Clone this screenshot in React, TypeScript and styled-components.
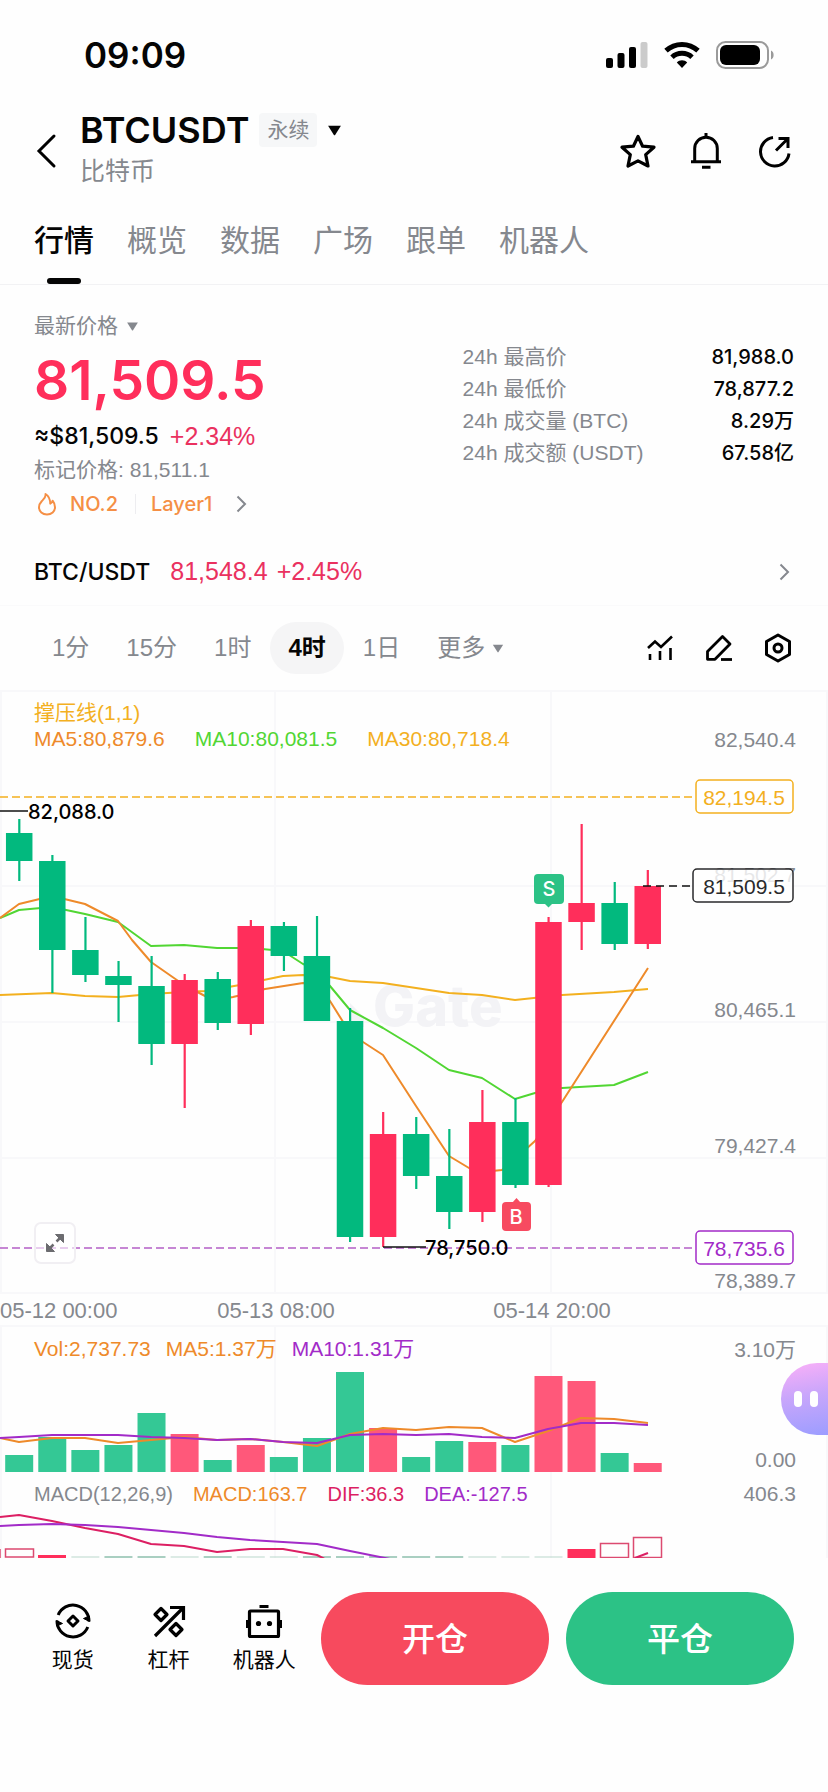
import React from "react";
import styled, { createGlobalStyle, css } from "styled-components";

const UP = "#ff2e5b";
const DOWN = "#02b97e";
const MUTED = "#85888e";
const GRID = "#f8f8fa";
const ORANGE = "#ee8a2a";
const YELLOW = "#f3b01f";
const LIME = "#51d633";
const PURPLE = "#a22bc8";
const CRIMSON = "#dc1f63";

const sans = `"Liberation Sans", "Noto Sans CJK SC", sans-serif`;
const medium = `Inter, "Noto Sans CJK SC", sans-serif`;

const GlobalStyle = createGlobalStyle`
  * { box-sizing: border-box; }
  body { margin: 0; background: #fefefe; color: #050505; font-family: ${sans}; }
  button { border: 0; padding: 0; margin: 0; background: none; color: inherit; font: inherit; cursor: pointer; }
  a { color: inherit; text-decoration: none; }
  svg { display: block; flex: none; }
  h1, p, dl, dd { margin: 0; }
`;

const Page = styled.main`
  width: 100%;
  overflow-x: hidden;
`;

/* ---------- status bar ---------- */

const StatusBar = styled.div`
  display: flex;
  align-items: center;
  justify-content: space-between;
  height: 96px;
  padding: 14px 54px 0 84px;
`;

const Clock = styled.time`
  font-family: ${medium};
  font-size: 35px;
  font-weight: 600;
  line-height: 44px;
`;

const StatusIcons = styled.div`
  display: flex;
  align-items: center;
  gap: 16px;
`;

/* ---------- header ---------- */

const Header = styled.header`
  display: flex;
  align-items: center;
  gap: 20px;
  padding: 12px 36px 14px 32px;
`;

const IconButton = styled.button`
  display: flex;
  align-items: center;
  justify-content: center;
`;

const TitleBlock = styled.div`
  flex: 1;
`;

const TitleRow = styled.div`
  display: flex;
  align-items: center;
  gap: 10px;
`;

const Title = styled.h1`
  font-family: ${medium};
  font-size: 36px;
  font-weight: 600;
  line-height: 44px;
`;

const Chip = styled.span`
  padding: 0 8px;
  border-radius: 4px;
  background: #f6f7f8;
  color: ${MUTED};
  font-size: 21px;
  line-height: 34px;
`;

const Subtitle = styled.p`
  color: ${MUTED};
  font-size: 25px;
  line-height: 38px;
`;

const HeaderActions = styled.div`
  display: flex;
  align-items: center;
  gap: 32px;
  padding-top: 4px;
`;

/* ---------- tabs ---------- */

const Tabs = styled.nav`
  display: flex;
  gap: 33px;
  padding: 0 34px;
  border-bottom: 1px solid #f2f2f4;
`;

const Tab = styled.a<{ $active?: boolean }>`
  position: relative;
  padding: 15px 0 21px;
  color: ${(p) => (p.$active ? "#050505" : MUTED)};
  font-size: 30px;
  font-weight: ${(p) => (p.$active ? 500 : 400)};
  line-height: 44px;
  white-space: nowrap;
  ${(p) =>
    p.$active &&
    css`
      &::after {
        content: "";
        position: absolute;
        bottom: 0;
        left: 50%;
        width: 34px;
        height: 6px;
        margin-left: -17px;
        border-radius: 3px;
        background: #050505;
      }
    `}
`;

/* ---------- price summary ---------- */

const Summary = styled.section`
  display: flex;
  justify-content: space-between;
  padding: 26px 34px 0;
`;

const PriceColumn = styled.div`
  display: flex;
  flex-direction: column;
  align-items: flex-start;
`;

const PriceKind = styled.button`
  display: flex;
  align-items: center;
  gap: 8px;
  color: ${MUTED};
  font-size: 21px;
  line-height: 30px;
`;

const LastPrice = styled.strong`
  color: ${UP};
  font-family: ${medium};
  font-size: 55px;
  font-weight: 600;
  line-height: 78px;
`;

const Line = styled.p`
  display: flex;
  align-items: center;
  gap: 11px;
  line-height: 34px;
`;

const Approx = styled.span`
  font-family: ${medium};
  font-size: 23px;
  font-weight: 500;
`;

const Change = styled.span`
  color: #ea315f;
  font-size: 25px;
`;

const MarkPrice = styled(Line)`
  color: ${MUTED};
  font-size: 21px;
`;

const TagLink = styled.a`
  display: flex;
  align-items: center;
  gap: 10px;
  color: #f58f45;
  font-family: ${medium};
  font-size: 20px;
  font-weight: 500;
  line-height: 34px;
`;

const TagDivider = styled.span`
  width: 1px;
  height: 20px;
  margin: 0 5px 0 7px;
  background: #ededf0;
`;

const TagArrow = styled.span`
  margin-left: 14px;
`;

const Stats = styled.dl`
  width: 44%;
  padding: 30px 0 0 3px;
`;

const StatRow = styled.div`
  display: flex;
  justify-content: space-between;
  font-size: 21px;
  line-height: 32px;
  white-space: nowrap;
`;

const StatName = styled.dt`
  color: ${MUTED};
`;

const StatValue = styled.dd`
  font-family: ${medium};
  font-size: 20px;
  font-weight: 500;
`;

/* ---------- spot pair row ---------- */

const SpotRow = styled.a`
  display: flex;
  align-items: center;
  height: 68px;
  margin-top: 17px;
  padding: 0 38px 0 34px;
  border-bottom: 1px solid #fafafb;
`;

const SpotPair = styled.span`
  margin-right: 20px;
  font-family: ${medium};
  font-size: 23px;
  font-weight: 500;
`;

const SpotQuote = styled.span`
  display: flex;
  flex: 1;
  gap: 9px;
  color: #ea315f;
  font-size: 25px;
`;

/* ---------- time frames ---------- */

const FrameBar = styled.div`
  display: flex;
  align-items: center;
  justify-content: space-between;
  height: 84px;
  padding: 0 36px 0 34px;
`;

const Frames = styled.div`
  display: flex;
  gap: 1px;
`;

const Frame = styled.button<{ $active?: boolean }>`
  display: flex;
  align-items: center;
  gap: 7px;
  padding: 0 18px;
  border-radius: 26px;
  background: ${(p) => (p.$active ? "#f5f5f6" : "transparent")};
  color: ${(p) => (p.$active ? "#050505" : MUTED)};
  font-size: 24px;
  font-weight: ${(p) => (p.$active ? 700 : 400)};
  line-height: 52px;
  white-space: nowrap;
`;

const FrameTools = styled.div`
  display: flex;
  align-items: center;
  gap: 31px;
`;

/* ---------- chart ---------- */

const Panel = styled.section`
  position: relative;
`;

const Plot = styled.svg`
  width: 100%;
  height: auto;
  font-family: ${sans};
  font-size: 21px;
`;

const AxisText = styled.text`
  fill: ${MUTED};
`;

const TimeText = styled(AxisText)`
  font-size: 22px;
`;

const StrongText = styled.text`
  font-family: ${medium};
  font-size: 20px;
  font-weight: 500;
`;

const Watermark = styled.text`
  font-family: ${medium};
  font-size: 56px;
  font-weight: 800;
`;

const Legend = styled.div<{ $top: number; $size: number }>`
  position: absolute;
  top: ${(p) => p.$top}px;
  left: 34px;
  font-size: ${(p) => p.$size}px;
  line-height: 26px;
  white-space: nowrap;
`;

const LegendRow = styled.div<{ $gap: number }>`
  display: flex;
  gap: ${(p) => p.$gap}px;
`;

const LegendItem = styled.span<{ $color: string }>`
  color: ${(p) => p.$color};
`;

const ExpandButton = styled.button`
  position: absolute;
  left: 34px;
  bottom: 63px;
  display: flex;
  align-items: center;
  justify-content: center;
  width: 42px;
  height: 42px;
  border: 2px solid #f1eff3;
  border-radius: 7px;
  background: rgba(255, 255, 255, 0.6);
`;

const Assistant = styled.button`
  position: absolute;
  top: 36px;
  right: 0;
  display: flex;
  align-items: center;
  gap: 8px;
  width: 47px;
  height: 72px;
  padding-left: 13px;
  border-radius: 36px 0 0 36px;
  background: linear-gradient(170deg, #fbb0f8 0%, #c9a6fb 45%, #9c9dff 100%);
`;

const Eye = styled.i`
  width: 8px;
  height: 16px;
  border-radius: 4px;
  background: #fff;
`;

/* ---------- bottom bar ---------- */

const BottomBar = styled.footer`
  display: flex;
  gap: 9px;
  padding: 34px 34px 107px 25px;
`;

const Shortcuts = styled.nav`
  display: flex;
  flex: none;
  width: 287px;
`;

const Shortcut = styled.a`
  display: flex;
  flex: 1;
  flex-direction: column;
  align-items: center;
  gap: 5px;
  padding-top: 11px;
  font-size: 21px;
  line-height: 32px;
  white-space: nowrap;
`;

const TradeActions = styled.div`
  display: flex;
  flex: 1;
  gap: 17px;
`;

const TradeButton = styled.button<{ $color: string }>`
  flex: 1;
  height: 93px;
  padding-bottom: 4px;
  border-radius: 47px;
  background: ${(p) => p.$color};
  color: #fff;
  font-size: 33px;
  font-weight: 500;
`;

/* ---------- data ---------- */

type Candle = {
  up: boolean;
  top: number;
  bottom: number;
  high: number;
  low: number;
  vol: number;
};

const c = (up: number, top: number, bottom: number, high: number, low: number, vol: number): Candle => ({
  up: up === 1,
  top,
  bottom,
  high,
  low,
  vol,
});

const candles: Candle[] = [
  c(0, 143, 171, 129, 191, 17),
  c(0, 171, 260, 165, 303, 35),
  c(0, 260, 285, 227, 292, 22),
  c(0, 286, 295, 271, 332, 27),
  c(0, 296, 354, 266, 375, 59),
  c(1, 290, 354, 284, 418, 38),
  c(0, 289, 333, 282, 340, 12),
  c(1, 236, 334, 230, 345, 27),
  c(0, 236, 266, 232, 281, 15),
  c(0, 266, 331, 226, 331, 34),
  c(0, 331, 547, 318, 552, 100),
  c(1, 444, 547, 422, 557, 44),
  c(0, 444, 486, 427, 499, 15),
  c(0, 486, 522, 439, 539, 31),
  c(1, 432, 522, 400, 532, 30),
  c(0, 432, 495, 408, 498, 27),
  c(1, 232, 495, 227, 497, 96),
  c(1, 213, 232, 134, 260, 91),
  c(0, 213, 254, 192, 260, 19),
  c(1, 196, 254, 180, 259, 9),
];

const slot = (i: number) => 19.2 + 33.08 * i;

const ma5 =
  "0,228 19,214 52,206 85,214 118,231 132,250 151,272 184,295 205,306 217,310 233,307 250,303 265,299 303,293 317,294 330,311 350,343 363,352 383,365 416,416 449,466 469,478 482,482 502,480 515,469 535,451 562,412 648,278";
const ma10 =
  "0,228 19,220 52,217 85,224 118,232 151,256 184,255 217,258 250,258 283,261 303,274 317,279 330,296 350,320 383,338 416,358 449,380 482,388 515,409 535,403 562,398 614,395 648,382";
const ma30 =
  "0,305 52,303 85,306 118,307 151,304 184,302 205,301 240,295 283,286 303,285 330,287 350,291 383,293 416,298 449,303 482,305 515,310 562,305 614,302 648,299";
const volMa5 =
  "0,111 19,115 52,111 85,111 118,116 151,113 184,110 217,113 250,112 283,115 317,119 350,107 383,101 416,103 449,100 482,101 515,115 548,104 581,91 614,92 648,96";
const volMa10 =
  "0,111 19,110 52,108 118,108 151,110 184,111 217,113 250,112 283,115 317,116 350,108 383,107 416,108 449,107 482,110 515,111 548,102 581,96 614,96 648,98";
const dif = "0,37 19,35 52,41 85,48 118,54 151,64 184,66 217,72 250,69 283,69 317,75 350,92";
const dea = "0,46 19,45 52,44 85,45 118,47 151,50 184,53 217,57 250,60 283,62 317,64 350,71 400,81";

const stats = [
  ["24h 最高价", "81,988.0"],
  ["24h 最低价", "78,877.2"],
  ["24h 成交量 (BTC)", "8.29万"],
  ["24h 成交额 (USDT)", "67.58亿"],
];

const tabs = ["行情", "概览", "数据", "广场", "跟单", "机器人"];
const frames = ["1分", "15分", "1时", "4时", "1日"];

/* ---------- icons ---------- */

const Caret = ({ w, h, color }: { w: number; h: number; color: string }) => (
  <svg width={w} height={h} viewBox="0 0 14 10" aria-hidden="true">
    <path d="M1 .5h12L7.6 9.2a.8.8 0 0 1-1.2 0Z" fill={color} />
  </svg>
);

const Chevron = () => (
  <svg width="11" height="18" viewBox="0 0 11 18" fill="none" stroke="#85888e" strokeWidth="2" aria-hidden="true">
    <path d="M1.5 1.5 9 9l-7.5 7.5" />
  </svg>
);

const SignalIcon = () => (
  <svg width="42" height="28" viewBox="0 0 42 28">
    <rect x="0" y="17" width="7" height="10" rx="2" />
    <rect x="11.5" y="12" width="7" height="15" rx="2" />
    <rect x="23" y="6" width="7" height="21" rx="2" />
    <rect x="34.5" y="1" width="7" height="26" rx="2" fill="#cbcbcb" />
  </svg>
);

const WifiIcon = () => (
  <svg width="36" height="28" viewBox="0 0 36 28" fill="none" stroke="#000" strokeWidth="5">
    <path d="M2 9.7C11 1.3 25 1.3 34 9.7" />
    <path d="M8 16.2C13.5 11 22.5 11 28 16.2" />
    <path d="M18 27 12.8 21.6C15.5 18.6 20.5 18.6 23.2 21.6Z" fill="#000" stroke="none" />
  </svg>
);

const BatteryIcon = () => (
  <svg width="58" height="28" viewBox="0 0 58 28">
    <rect x="1" y="1" width="51" height="26" rx="8.5" fill="none" stroke="#9a9a9a" strokeWidth="2" />
    <rect x="4" y="4" width="40" height="20" rx="6" />
    <path d="M55 9.5c3.5 1 3.5 8 0 9Z" fill="#9a9a9a" />
  </svg>
);

const BackIcon = () => (
  <svg width="28" height="40" viewBox="0 0 28 40" fill="none" stroke="#000" strokeWidth="3">
    <path d="M22 7 7 22l15 15" strokeLinecap="round" />
  </svg>
);

const StarIcon = () => (
  <svg width="36" height="36" viewBox="0 0 36 36" fill="none" stroke="#000" strokeWidth="3.2" strokeLinejoin="round">
    <path d="M18 3.5 22.6 13.2 34 14.2 25.7 21.6 28 33 18 27.8 8 33 10.3 21.6 2 14.2 13.4 13.2Z" />
  </svg>
);

const BellIcon = () => (
  <svg width="36" height="38" viewBox="0 0 36 38" fill="none" stroke="#000" strokeWidth="3">
    <path d="M6.7 29V16.5a11.3 11.3 0 0 1 22.6 0V29" />
    <path d="M3 29.8h30M18 1v5M14 35.3h8.5" />
  </svg>
);

const ShareIcon = () => (
  <svg width="36" height="36" viewBox="0 0 36 36" fill="none" stroke="#000" strokeWidth="3">
    <path d="M17 4.5A14.3 14.3 0 1 0 33 20.5" />
    <path d="M20 17.5 31.5 6M22.5 5.5H32V15" />
  </svg>
);

const FlameIcon = () => (
  <svg width="26" height="26" viewBox="0 0 26 26" fill="none" stroke="#f58f45" strokeWidth="2" strokeLinejoin="round">
    <path d="M11.5 3c.8 3-1.5 4.8-3.8 7.2C5.8 12.2 5 14 5 16.2 5 20.5 8.5 23.5 13 23.5s8-3 8-7.3c0-2.5-.9-4.7-2.4-6.5-.4 1.5-1.2 2.5-2.3 3C16.2 8.5 14.8 5 11.5 3Z" />
  </svg>
);

const IndicatorIcon = () => (
  <svg width="28" height="28" viewBox="0 0 28 28" fill="none" stroke="#000" strokeWidth="2.6">
    <path d="M2 14 9 7.5l6 5.5L26 2.5" />
    <path d="M4 20v6M14 17v9M24.5 14v12" />
  </svg>
);

const PenIcon = () => (
  <svg width="28" height="28" viewBox="0 0 28 28" fill="none" stroke="#000" strokeWidth="2.8" strokeLinejoin="round">
    <path d="M2.5 25.3V17.5L17.5 2.5 25 10 10 25.3Z" />
    <path d="M16 25.5h11" />
  </svg>
);

const HexIcon = () => (
  <svg width="28" height="30" viewBox="0 0 28 30" fill="none" stroke="#000" strokeWidth="3" strokeLinejoin="round">
    <path d="M14 2 25.5 8.5v13L14 28 2.5 21.5v-13Z" />
    <circle cx="14" cy="15" r="4" />
  </svg>
);

const ExpandIcon = () => (
  <svg width="22" height="22" viewBox="0 0 22 22" fill="#6c6c70" stroke="#6c6c70" strokeWidth="2.5">
    <path d="M12.5 9.5 19 3M9.5 12.5 3 19" />
    <path d="M11.5 2.5H19.5V10.5ZM2.5 11.5V19.5H10.5Z" strokeWidth="1" />
  </svg>
);

const SpotIcon = () => (
  <svg width="36" height="36" viewBox="0 0 36 36" fill="none" stroke="#000" strokeWidth="3">
    <path d="M3.2 12A16 16 0 0 1 34 18.5M32.8 24A16 16 0 0 1 2 17.5" />
    <path d="M28.5 15.5 34.5 18.5V13ZM7.5 20.5 1.5 17.5V23Z" fill="#000" strokeWidth="1" />
    <path d="M18 13 23 18 18 23 13 18Z" strokeLinejoin="round" />
  </svg>
);

const MarginIcon = () => (
  <svg width="36" height="36" viewBox="0 0 36 36" fill="none" stroke="#000" strokeWidth="3.2">
    <path d="M4 33 32 5M19 4.5H32.5V17" />
    <path d="M10 5.5 16 11.5 10 17.5 4 11.5ZM25 20.5 31 26.5 25 32.5 19 26.5Z" strokeLinejoin="round" />
  </svg>
);

const RobotIcon = () => (
  <svg width="36" height="36" viewBox="0 0 36 36" fill="none" stroke="#000" strokeWidth="3.2">
    <rect x="3.5" y="8" width="29" height="25.5" rx="1" />
    <path d="M13.5 3.5h9M1.5 17v8M34.5 17v8" />
    <circle cx="12.5" cy="20.5" r="2.6" fill="#000" stroke="none" />
    <circle cx="23.5" cy="20.5" r="2.6" fill="#000" stroke="none" />
  </svg>
);

/* ---------- chart parts ---------- */

const GridColumns = ({ height }: { height: number }) => (
  <g stroke={GRID} strokeWidth="2">
    {[1, 275, 551, 827].map((x) => (
      <line key={x} x1={x} x2={x} y1="0" y2={height} />
    ))}
  </g>
);

const PriceTag = ({ y, x, color, value }: { y: number; x: number; color: string; value: string }) => (
  <g>
    <rect x={x} y={y - 17} width={793 - x} height="33" rx="4" fill="#fff" fillOpacity="0.8" stroke={color} strokeWidth="1.5" />
    <text x={744} y={y + 8} fill={color} textAnchor="middle">
      {value}
    </text>
  </g>
);

const PricePanel = () => (
  <Panel aria-label="K线图">
    <Plot viewBox="0 0 828 637">
      <g stroke={GRID} strokeWidth="2">
        {[1, 196, 332, 468, 603, 636].map((y) => (
          <line key={y} x1="0" x2="828" y1={y} y2={y} />
        ))}
      </g>
      <GridColumns height={603} />
      <g fill="#f3f3f6">
        <path d="M350 313 364 327v10h-14Z" />
        <Watermark x="373" y="336">Gate</Watermark>
      </g>
      <g fill="none" strokeWidth="2" strokeLinejoin="round">
        <polyline points={ma30} stroke={YELLOW} />
        <polyline points={ma10} stroke={LIME} />
        <polyline points={ma5} stroke={ORANGE} />
      </g>
      <g strokeWidth="1.5">
        <line x1="0" x2="696" y1="107" y2="107" stroke={YELLOW} strokeDasharray="8 4" />
        <line x1="0" x2="696" y1="558" y2="558" stroke="#b45fc6" strokeDasharray="8 4" />
      </g>
      {candles.map((k, i) => (
        <g key={i} fill={k.up ? UP : DOWN}>
          <rect x={slot(i) - 1} y={k.high} width="2.2" height={k.low - k.high} />
          <rect x={slot(i) - 13.25} y={k.top} width="26.5" height={k.bottom - k.top} />
        </g>
      ))}
      <g stroke="#111" strokeWidth="1.5">
        <line x1="0" x2="28" y1="121" y2="121" />
        <line x1="383" x2="426" y1="557" y2="557" />
        <line x1="643" x2="690" y1="196" y2="196" strokeDasharray="8 5" />
      </g>
      <StrongText x="28" y="129">82,088.0</StrongText>
      <StrongText x="425" y="565">78,750.0</StrongText>
      <g textAnchor="end">
        <AxisText x="796" y="57">82,540.4</AxisText>
        <AxisText x="796" y="192">81,502.7</AxisText>
        <AxisText x="796" y="327">80,465.1</AxisText>
        <AxisText x="796" y="463">79,427.4</AxisText>
        <AxisText x="796" y="598">78,389.7</AxisText>
      </g>
      <PriceTag x={696} y={107} color={YELLOW} value="82,194.5" />
      <PriceTag x={693} y={196} color="#2a2a2c" value="81,509.5" />
      <PriceTag x={696} y={558} color={PURPLE} value="78,735.6" />
      <g fill="#2cc286">
        <rect x="534" y="184" width="30" height="30" rx="4" />
        <path d="M544 213h9l-4.5 4.5Z" />
      </g>
      <g fill="#f74a60">
        <rect x="502" y="512" width="29" height="29" rx="4" />
        <path d="M512 513h9l-4.5-5Z" />
      </g>
      <g textAnchor="middle" fill="#fff">
        <StrongText x="549" y="206">S</StrongText>
        <StrongText x="516" y="534">B</StrongText>
      </g>
      <TimeText x="0" y="628">05-12 00:00</TimeText>
      <g textAnchor="middle">
        <TimeText x="276" y="628">05-13 08:00</TimeText>
        <TimeText x="552" y="628">05-14 20:00</TimeText>
      </g>
    </Plot>
    <Legend $top={10} $size={21}>
      <LegendRow $gap={30}>
        <LegendItem $color={YELLOW}>撑压线(1,1)</LegendItem>
      </LegendRow>
      <LegendRow $gap={30}>
        <LegendItem $color={ORANGE}>MA5:80,879.6</LegendItem>
        <LegendItem $color={LIME}>MA10:80,081.5</LegendItem>
        <LegendItem $color={YELLOW}>MA30:80,718.4</LegendItem>
      </LegendRow>
    </Legend>
    <ExpandButton aria-label="全屏">
      <ExpandIcon />
    </ExpandButton>
  </Panel>
);

const VolumePanel = () => (
  <Panel aria-label="成交量">
    <Plot viewBox="0 0 828 153">
      <GridColumns height={153} />
      {candles.map((k, i) => (
        <rect
          key={i}
          x={slot(i) - 14}
          y={145 - k.vol}
          width="28"
          height={k.vol}
          fill={k.up ? "#ff587a" : "#34c895"}
        />
      ))}
      <g fill="none" strokeWidth="2" strokeLinejoin="round">
        <polyline points={volMa5} stroke={ORANGE} />
        <polyline points={volMa10} stroke={PURPLE} />
      </g>
      <g textAnchor="end">
        <AxisText x="796" y="30">3.10万</AxisText>
        <AxisText x="796" y="140">0.00</AxisText>
      </g>
    </Plot>
    <Legend $top={9} $size={21}>
      <LegendRow $gap={15}>
        <LegendItem $color={ORANGE}>Vol:2,737.73</LegendItem>
        <LegendItem $color={ORANGE}>MA5:1.37万</LegendItem>
        <LegendItem $color={PURPLE}>MA10:1.31万</LegendItem>
      </LegendRow>
    </Legend>
    <Assistant aria-label="智能助手">
      <Eye />
      <Eye />
    </Assistant>
  </Panel>
);

const MacdPanel = () => (
  <Panel aria-label="MACD">
    <Plot viewBox="0 0 828 78">
      <GridColumns height={78} />
      <g stroke="#a9cfc1" strokeWidth="2">
        {candles.slice(2, 17).map((_, i) => (
          <line
            key={i}
            x1={slot(i + 2) - 14}
            x2={slot(i + 2) + 14}
            y1="77"
            y2="77"
            strokeOpacity={[1, 2, 4, 7, 8, 9, 10, 11].includes(i) ? 1 : 0.4}
          />
        ))}
      </g>
      <g fill="none" stroke="#dc4a70" strokeWidth="1.5">
        <path d="M0 69v9" />
        <rect x="5.5" y="69" width="28" height="8" />
        <rect x="600.5" y="63.5" width="28" height="14" />
        <rect x="633.5" y="57.5" width="28" height="20" />
      </g>
      <g fill={UP}>
        <rect x="38" y="75" width="28" height="3" />
        <rect x="567.5" y="69" width="28" height="9" />
      </g>
      <g fill="none" strokeWidth="2" strokeLinejoin="round">
        <polyline points={dif} stroke={CRIMSON} />
        <polyline points="635,78 648,73" stroke={CRIMSON} />
        <polyline points={dea} stroke={PURPLE} />
      </g>
      <AxisText x="796" y="21" textAnchor="end">406.3</AxisText>
    </Plot>
    <Legend $top={1} $size={20}>
      <LegendRow $gap={20}>
        <LegendItem $color={MUTED}>MACD(12,26,9)</LegendItem>
        <LegendItem $color={ORANGE}>MACD:163.7</LegendItem>
        <LegendItem $color={CRIMSON}>DIF:36.3</LegendItem>
        <LegendItem $color={PURPLE}>DEA:-127.5</LegendItem>
      </LegendRow>
    </Legend>
  </Panel>
);

export default function App() {
  return (
    <Page lang="zh-CN">
      <GlobalStyle />
      <StatusBar>
        <Clock>09:09</Clock>
        <StatusIcons aria-hidden="true">
          <SignalIcon />
          <WifiIcon />
          <BatteryIcon />
        </StatusIcons>
      </StatusBar>

      <Header>
        <IconButton aria-label="返回">
          <BackIcon />
        </IconButton>
        <TitleBlock>
          <TitleRow>
            <Title>BTCUSDT</Title>
            <Chip>永续</Chip>
            <IconButton aria-label="切换合约">
              <Caret w={15} h={11} color="#050505" />
            </IconButton>
          </TitleRow>
          <Subtitle>比特币</Subtitle>
        </TitleBlock>
        <HeaderActions>
          <IconButton aria-label="收藏">
            <StarIcon />
          </IconButton>
          <IconButton aria-label="提醒">
            <BellIcon />
          </IconButton>
          <IconButton aria-label="分享">
            <ShareIcon />
          </IconButton>
        </HeaderActions>
      </Header>

      <Tabs>
        {tabs.map((name, i) => (
          <Tab key={name} href="#" $active={i === 0}>
            {name}
          </Tab>
        ))}
      </Tabs>

      <Summary>
        <PriceColumn>
          <PriceKind>
            最新价格
            <Caret w={13} h={9} color={MUTED} />
          </PriceKind>
          <LastPrice>81,509.5</LastPrice>
          <Line>
            <Approx>≈$81,509.5</Approx>
            <Change>+2.34%</Change>
          </Line>
          <MarkPrice>标记价格: 81,511.1</MarkPrice>
          <TagLink href="#">
            <FlameIcon />
            NO.2
            <TagDivider />
            Layer1
            <TagArrow>
              <Chevron />
            </TagArrow>
          </TagLink>
        </PriceColumn>
        <Stats>
          {stats.map(([name, value]) => (
            <StatRow key={name}>
              <StatName>{name}</StatName>
              <StatValue>{value}</StatValue>
            </StatRow>
          ))}
        </Stats>
      </Summary>

      <SpotRow href="#">
        <SpotPair>BTC/USDT</SpotPair>
        <SpotQuote>
          <span>81,548.4</span>
          <span>+2.45%</span>
        </SpotQuote>
        <Chevron />
      </SpotRow>

      <FrameBar>
        <Frames>
          {frames.map((name) => (
            <Frame key={name} $active={name === "4时"}>
              {name}
            </Frame>
          ))}
          <Frame>
            更多
            <Caret w={12} h={9} color={MUTED} />
          </Frame>
        </Frames>
        <FrameTools>
          <IconButton aria-label="指标">
            <IndicatorIcon />
          </IconButton>
          <IconButton aria-label="画线">
            <PenIcon />
          </IconButton>
          <IconButton aria-label="设置">
            <HexIcon />
          </IconButton>
        </FrameTools>
      </FrameBar>

      <PricePanel />
      <VolumePanel />
      <MacdPanel />

      <BottomBar>
        <Shortcuts>
          <Shortcut href="#">
            <SpotIcon />
            现货
          </Shortcut>
          <Shortcut href="#">
            <MarginIcon />
            杠杆
          </Shortcut>
          <Shortcut href="#">
            <RobotIcon />
            机器人
          </Shortcut>
        </Shortcuts>
        <TradeActions>
          <TradeButton $color="#f74a5e">开仓</TradeButton>
          <TradeButton $color="#2cc286">平仓</TradeButton>
        </TradeActions>
      </BottomBar>
    </Page>
  );
}
